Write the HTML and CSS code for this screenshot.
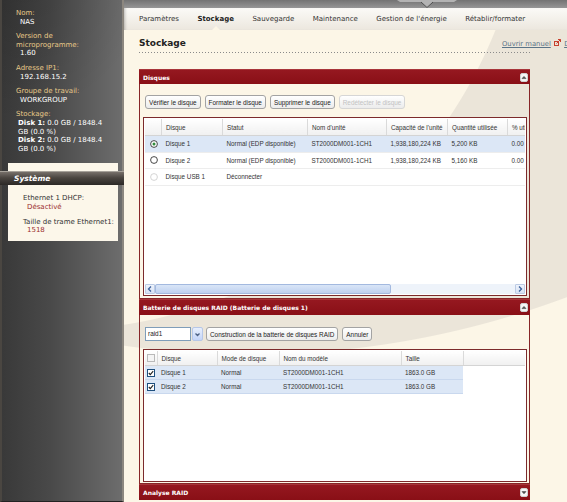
FILE: index.html
```html
<!DOCTYPE html>
<html lang="fr">
<head>
    <meta charset="UTF-8">
    <title>Stockage</title>
    <link rel="stylesheet" href="styles.css">
</head>
<body>
<div class="page">

    <!-- Barre latérale : infos du NAS -->
    <aside class="sidebar">
        <dl class="info">
            <dt>Nom:</dt>
            <dd>NAS</dd>
            <dt>Version de microprogramme:</dt>
            <dd>1.60</dd>
            <dt>Adresse IP1:</dt>
            <dd>192.168.15.2</dd>
            <dt>Groupe de travail:</dt>
            <dd>WORKGROUP</dd>
            <dt>Stockage:</dt>
            <dd class="disks"><b>Disk 1:</b> 0.0 GB / 1848.4 GB (0.0 %)<br><b>Disk 2:</b> 0.0 GB / 1848.4 GB (0.0 %)</dd>
        </dl>

        <div class="system-box">
            <div class="system-title">Système</div>
            <dl class="system-info">
                <dt>Ethernet 1 DHCP:</dt>
                <dd>Désactivé</dd>
                <dt>Taille de trame Ethernet1:</dt>
                <dd>1518</dd>
            </dl>
        </div>
    </aside>

    <main class="main">
        <div class="top-strip">
            <svg width="60" height="8" viewBox="0 0 60 8">
                <path d="M0 0 H60 L57 2 H36 L30 8 L24 2 H3 Z" fill="#b3b3b3"/>
                <path d="M24 2 L30 7.5 L36 2" fill="none" stroke="#4e4e4e" stroke-width="1"/>
            </svg>
        </div>

        <nav class="tabs">
            <span class="tab">Paramètres</span>
            <span class="tab active">Stockage</span>
            <span class="tab">Sauvegarde</span>
            <span class="tab">Maintenance</span>
            <span class="tab">Gestion de l'énergie</span>
            <span class="tab">Rétablir/formater</span>
        </nav>

        <div class="content">
            <div class="title-bar">
                <h1>Stockage</h1>
                <span class="links">
                    <a href="#">Ouvrir manuel</a>
                    <svg class="ext-icon" width="7" height="7" viewBox="0 0 7 7">
                        <rect x="0.5" y="2.5" width="4" height="4" fill="none" stroke="#c8402f"/>
                        <path d="M2.5 4.5 L6.5 0.5 M4 0.5 H6.5 V3" fill="none" stroke="#c8402f"/>
                    </svg>
                    <a href="#">Déconnexion</a>
                </span>
            </div>

            <!-- Disques -->
            <section class="panel">
                <div class="panel-head">
                    <span>Disques</span>
                    <span class="toggle">
                        <svg width="8" height="9" viewBox="0 0 8 9">
                            <rect x="0.5" y="0.5" width="7" height="8" rx="1.5" fill="#f6f6f6" stroke="#d0d0d0"/>
                            <path d="M2 5.6 L4 3.4 L6 5.6 Z" fill="#4a4a4a" stroke="#4a4a4a" stroke-width="0.6"/>
                        </svg>
                    </span>
                </div>
                <div class="panel-body disks-body">
                    <div class="toolbar">
                        <button class="btn">Vérifier le disque</button>
                        <button class="btn">Formater le disque</button>
                        <button class="btn">Supprimer le disque</button>
                        <button class="btn" disabled>Redétecter le disque</button>
                    </div>

                    <div class="grid disk-grid">
                        <div class="grid-view">
                            <table>
                                <colgroup>
                                    <col style="width:16px"><col style="width:61px"><col style="width:85px">
                                    <col style="width:79px"><col style="width:61px"><col style="width:60px"><col style="width:80px">
                                </colgroup>
                                <thead>
                                    <tr>
                                        <th></th><th>Disque</th><th>Statut</th><th>Nom d'unité</th>
                                        <th>Capacité de l'unité</th><th>Quantité utilisée</th><th>% utilisé</th>
                                    </tr>
                                </thead>
                                <tbody>
                                    <tr class="selected">
                                        <td class="pick">
                                            <svg width="8" height="8" viewBox="0 0 8 8"><circle cx="4" cy="4" r="3.4" fill="#fff" stroke="#333" stroke-width="0.9"/><circle cx="4" cy="4" r="1.5" fill="#2f8a3a"/></svg>
                                        </td>
                                        <td>Disque 1</td><td>Normal (EDP disponible)</td><td>ST2000DM001-1CH1</td>
                                        <td>1,938,180,224 KB</td><td>5,200 KB</td><td>0.00 %</td>
                                    </tr>
                                    <tr>
                                        <td class="pick">
                                            <svg width="8" height="8" viewBox="0 0 8 8"><circle cx="4" cy="4" r="3.4" fill="#fff" stroke="#333" stroke-width="0.9"/></svg>
                                        </td>
                                        <td>Disque 2</td><td>Normal (EDP disponible)</td><td>ST2000DM001-1CH1</td>
                                        <td>1,938,180,224 KB</td><td>5,160 KB</td><td>0.00 %</td>
                                    </tr>
                                    <tr>
                                        <td class="pick">
                                            <svg width="8" height="8" viewBox="0 0 8 8"><circle cx="4" cy="4" r="3.4" fill="#fff" stroke="#cfcfcf" stroke-width="0.9"/></svg>
                                        </td>
                                        <td>Disque USB 1</td><td>Déconnecter</td><td></td><td></td><td></td><td></td>
                                    </tr>
                                </tbody>
                            </table>
                        </div>
                        <div class="hscroll">
                            <span class="arrow">
                                <svg width="8" height="8" viewBox="0 0 8 8"><path d="M5 1.5 L2.5 4 L5 6.5" fill="none" stroke="#3b5f9a" stroke-width="1.3"/></svg>
                            </span>
                            <span class="track"><span class="thumb"></span></span>
                            <span class="arrow">
                                <svg width="8" height="8" viewBox="0 0 8 8"><path d="M3 1.5 L5.5 4 L3 6.5" fill="none" stroke="#3b5f9a" stroke-width="1.3"/></svg>
                            </span>
                        </div>
                    </div>
                </div>
            </section>

            <!-- Batterie RAID -->
            <section class="panel">
                <div class="panel-head">
                    <span>Batterie de disques RAID (Batterie de disques 1)</span>
                    <span class="toggle">
                        <svg width="8" height="9" viewBox="0 0 8 9">
                            <rect x="0.5" y="0.5" width="7" height="8" rx="1.5" fill="#f6f6f6" stroke="#d0d0d0"/>
                            <path d="M2 5.6 L4 3.4 L6 5.6 Z" fill="#4a4a4a" stroke="#4a4a4a" stroke-width="0.6"/>
                        </svg>
                    </span>
                </div>
                <div class="panel-body raid-body">
                    <div class="toolbar">
                        <span class="select">
                            <span class="select-value">raid1</span>
                            <span class="select-btn">
                                <svg width="7" height="7" viewBox="0 0 7 7"><path d="M1.5 2.5 L3.5 4.5 L5.5 2.5" fill="none" stroke="#4d6185" stroke-width="1.3"/></svg>
                            </span>
                        </span>
                        <button class="btn">Construction de la batterie de disques RAID</button>
                        <button class="btn">Annuler</button>
                    </div>

                    <div class="grid raid-grid">
                        <div class="grid-view">
                            <table>
                                <colgroup>
                                    <col style="width:12px"><col style="width:60px"><col style="width:62px">
                                    <col style="width:122px"><col style="width:62px"><col>
                                </colgroup>
                                <thead>
                                    <tr>
                                        <th class="pick">
                                            <svg width="8" height="8" viewBox="0 0 8 8"><rect x="0.5" y="0.5" width="7" height="7" fill="#f4f4f4" stroke="#b9b9b9"/></svg>
                                        </th>
                                        <th>Disque</th><th>Mode de disque</th><th>Nom du modèle</th><th>Taille</th><th class="filler"></th>
                                    </tr>
                                </thead>
                                <tbody>
                                    <tr class="selected">
                                        <td class="pick">
                                            <svg width="8" height="8" viewBox="0 0 8 8"><rect x="0.5" y="0.5" width="7" height="7" fill="#fff" stroke="#1e4f7e"/><path d="M1.8 4 L3.3 5.6 L6.2 2.2" fill="none" stroke="#222" stroke-width="1.1"/></svg>
                                        </td>
                                        <td>Disque 1</td><td>Normal</td><td>ST2000DM001-1CH1</td><td>1863.0 GB</td><td class="filler"></td>
                                    </tr>
                                    <tr class="selected">
                                        <td class="pick">
                                            <svg width="8" height="8" viewBox="0 0 8 8"><rect x="0.5" y="0.5" width="7" height="7" fill="#fff" stroke="#1e4f7e"/><path d="M1.8 4 L3.3 5.6 L6.2 2.2" fill="none" stroke="#222" stroke-width="1.1"/></svg>
                                        </td>
                                        <td>Disque 2</td><td>Normal</td><td>ST2000DM001-1CH1</td><td>1863.0 GB</td><td class="filler"></td>
                                    </tr>
                                </tbody>
                            </table>
                        </div>
                    </div>
                </div>
            </section>

            <!-- Analyse RAID -->
            <section class="panel">
                <div class="panel-head">
                    <span>Analyse RAID</span>
                    <span class="toggle">
                        <svg width="8" height="9" viewBox="0 0 8 9">
                            <rect x="0.5" y="0.5" width="7" height="8" rx="1.5" fill="#f6f6f6" stroke="#d0d0d0"/>
                            <path d="M2 3.6 L4 5.8 L6 3.6 Z" fill="#4a4a4a" stroke="#4a4a4a" stroke-width="0.6"/>
                        </svg>
                    </span>
                </div>
            </section>
        </div>
    </main>
</div>
</body>
</html>
```

FILE: styles.css
```css
html, body {
    margin: 0;
    height: 100%;
    overflow: hidden;
}

body {
    font-family: "DejaVu Sans", Verdana, sans-serif;
    background: #fcf6e7;
}

.page {
    display: flex;
    height: 502px;
}

/* ---------- Sidebar ---------- */
.sidebar {
    width: 124px;
    flex: none;
    box-sizing: border-box;
    border-left: 2px solid #4a4641;
    border-right: 2px solid #8c877f;
    border-bottom: 1px solid #222;
    padding-top: 9px;
    background:
        radial-gradient(circle 150px at 0 -30px, rgba(0, 0, 0, 0.18), transparent 150px),
        linear-gradient(to right, #393939, #494949 40%, #6d6d6d);
}

.info {
    margin: 0;
    padding: 0 12px 0 14px;
    font-size: 7px;
    line-height: 8.6px;
}

.info dt {
    color: #e7c888;
}

.info dd {
    margin: 0 0 6px 4px;
    color: #fff;
}

.info dd.disks {
    margin-left: 2px;
}

.system-box {
    margin: 10px 4px 0 6px;
    padding: 8px 0 6px;
    background: #fcf7ea;
}

.system-title {
    margin: 0 -6px 0 -8px;
    height: 14px;
    box-sizing: border-box;
    padding-left: 14px;
    border-top: 1px solid #a7a29a;
    background: linear-gradient(#77706a, #4a4540 45%, #2c2926);
    color: #fff;
    font-size: 7.5px;
    font-weight: bold;
    font-style: italic;
    line-height: 13px;
}

.system-info {
    margin: 9px 0 0;
    padding-left: 15px;
    font-size: 7px;
    line-height: 8.6px;
}

.system-info dt {
    color: #333;
}

.system-info dd {
    margin: 0 0 6px 4px;
    color: #9b2d2d;
}

.system-info dd:last-child {
    margin-bottom: 0;
}

/* ---------- Main ---------- */
.main {
    flex: 1;
    min-width: 0;
    display: flex;
    flex-direction: column;
    overflow: hidden;
}

.top-strip {
    height: 8px;
    flex: none;
    display: flex;
    padding-left: 273px;
    background: linear-gradient(#737373, #969696);
}

.tabs {
    height: 22px;
    flex: none;
    display: flex;
    gap: 18.5px;
    padding-left: 15px;
    background: linear-gradient(#fbfaf7, #ece7de);
    box-shadow: inset 3px 0 3px -2px rgba(0, 0, 0, 0.25);
    font-size: 7px;
    color: #333;
}

.tab {
    position: relative;
    display: flex;
    align-items: center;
    white-space: nowrap;
}

.tab.active {
    font-weight: bold;
    color: #222;
}

.tab.active::after {
    content: "";
    position: absolute;
    bottom: 0;
    left: 50%;
    margin-left: -4px;
    border-left: 4px solid transparent;
    border-right: 4px solid transparent;
    border-bottom: 4px solid #fcf6e7;
}

.content {
    flex: 1;
    padding: 0 37px 0 15px;
    background:
        radial-gradient(circle 481px at -74px -180px, #fcf6e7 480px, transparent 481px),
        radial-gradient(circle 905px at 126px -580px, #ebe5d9 904px, transparent 905px),
        #fcf6e7;
}

.title-bar {
    display: flex;
    align-items: flex-end;
    padding: 7px 0 4px;
    background: repeating-linear-gradient(to right, #8a8a8a 0 1px, transparent 1px 3px) left bottom / 100% 1px no-repeat;
}

.title-bar h1 {
    flex: 1;
    margin: 0;
    font-size: 9px;
    line-height: 12px;
    color: #222;
}

.links {
    width: 28px;
    white-space: nowrap;
    font-size: 6.8px;
    line-height: 8px;
    padding-bottom: 1px;
}

.links a {
    color: #5a7488;
}

.ext-icon {
    margin: 0 1px;
}

/* ---------- Panels ---------- */
.panel {
    margin-top: 16px;
}

.panel + .panel {
    margin-top: 0;
}

.panel-head {
    height: 16px;
    box-sizing: border-box;
    display: flex;
    align-items: center;
    justify-content: space-between;
    padding: 0 2px 0 4px;
    border-top: 1px solid #a8353a;
    background: linear-gradient(#951820, #890f16);
    color: #fff;
    font-size: 6px;
    font-weight: bold;
}

.panel:first-of-type .panel-head {
    height: 15px;
}

.toggle {
    display: flex;
}

.panel-body {
    border: 1px solid #872628;
    border-top: none;
    padding: 11px 2px 2px 3px;
}

.raid-body {
    padding: 12px 2px 1px 3px;
}

.toolbar {
    display: flex;
    gap: 4px;
    height: 14px;
    padding-left: 2px;
    margin-bottom: 8px;
}

.btn {
    height: 14px;
    padding: 0 3px;
    border: 1px solid #a3a3a3;
    border-radius: 3px;
    background: linear-gradient(#ffffff, #ececec);
    font-family: "Liberation Sans", Arial, sans-serif;
    font-size: 6.4px;
    color: #222;
}

.btn:disabled {
    color: #c2c2c2;
    border-color: #d6d6d6;
}

.select {
    display: flex;
    gap: 1px;
    margin-right: -1px;
}

.select-value {
    width: 46px;
    height: 14px;
    box-sizing: border-box;
    padding-left: 2px;
    border: 1px solid #7f9db9;
    background: #fff;
    font-family: "Liberation Sans", Arial, sans-serif;
    font-size: 6.4px;
    line-height: 12px;
    color: #222;
}

.select-btn {
    width: 11px;
    height: 14px;
    box-sizing: border-box;
    display: flex;
    align-items: center;
    justify-content: center;
    border: 1px solid #b6c7e8;
    border-radius: 2px;
    background: linear-gradient(#e8effc, #c3d4f8);
}

/* ---------- Grids ---------- */
.grid {
    display: flex;
    flex-direction: column;
    box-sizing: border-box;
    padding: 1px;
    border: 1px solid #7c2a2b;
    background: #fff;
    overflow: hidden;
}

.disk-grid {
    height: 179px;
}

.raid-grid {
    height: 133px;
}

.grid-view {
    flex: 1;
    overflow: hidden;
}

.grid table {
    border-collapse: collapse;
    table-layout: fixed;
    font-family: "Liberation Sans", Arial, sans-serif;
    font-size: 6.3px;
    color: #333;
}

.disk-grid table {
    width: 442px;
}

.raid-grid table {
    width: 380px;
}

.grid th {
    height: 16px;
    padding: 0 0 0 4.5px;
    border-right: 1px solid #dadada;
    border-bottom: 1px solid #d4d4d4;
    background: linear-gradient(#ffffff, #f0f0f0);
    font-weight: normal;
    text-align: left;
    white-space: nowrap;
    overflow: hidden;
}

.grid td {
    height: 15.5px;
    padding: 0 0 0 4.5px;
    border-bottom: 1px solid #ededed;
    white-space: nowrap;
    overflow: hidden;
}

.raid-grid th {
    height: 14px;
    padding-left: 4px;
}

.raid-grid td {
    height: 13px;
    padding-left: 4px;
    border-bottom: 1px solid #fff;
}

.grid .pick {
    padding: 0;
    text-align: center;
    line-height: 0;
}

.grid .pick svg {
    vertical-align: middle;
}

.disk-grid .pick {
    padding-left: 1px;
}

.grid tr.selected td {
    background: #dce7f6;
}

.raid-grid tr.selected td {
    border-bottom-color: #c9d8ee;
}

.grid tr.selected td.filler {
    background: none;
    border-bottom-color: #fff;
}

.grid th.filler {
    border-right: none;
}

.hscroll {
    height: 10px;
    flex: none;
    display: flex;
    background: #eef3fa;
}

.arrow {
    width: 10px;
    box-sizing: border-box;
    display: flex;
    align-items: center;
    justify-content: center;
    border: 1px solid #bccbe4;
    border-radius: 1px;
    background: linear-gradient(#eef3fb, #d7e2f5);
}

.track {
    flex: 1;
    display: flex;
}

.thumb {
    width: 236px;
    box-sizing: border-box;
    border: 1px solid #a3b9df;
    border-radius: 2px;
    background: linear-gradient(#d9e5f7, #bfd1f0);
}
```
